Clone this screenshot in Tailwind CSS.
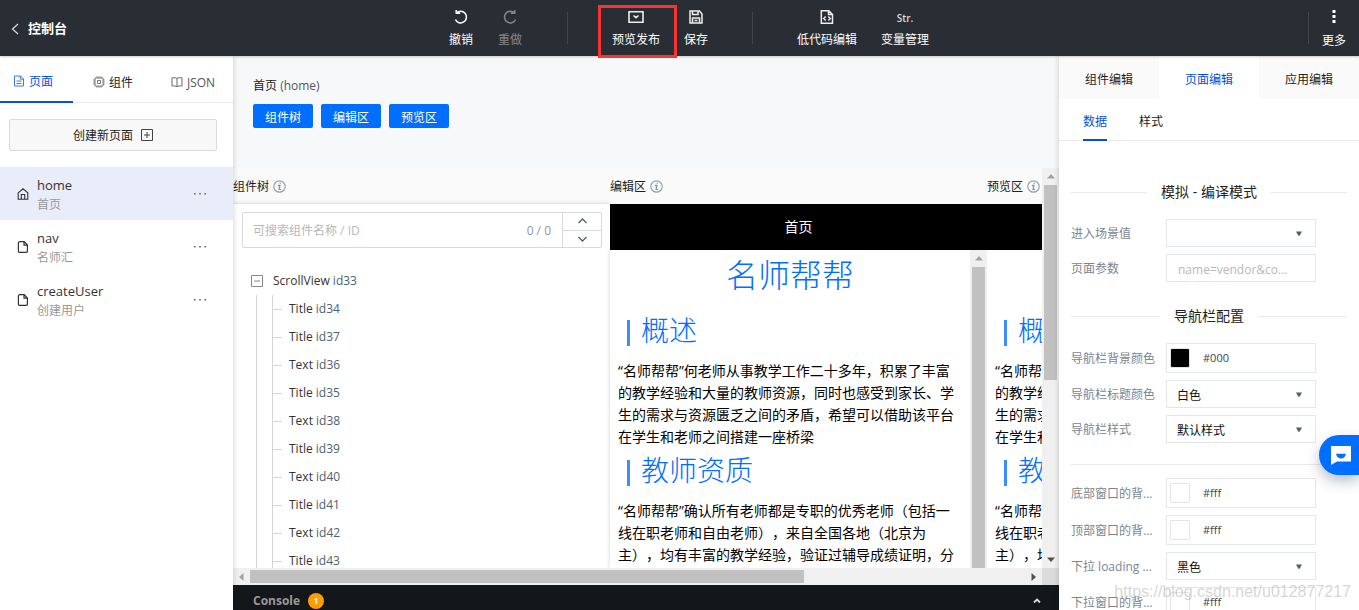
<!DOCTYPE html>
<html lang="zh-CN">
<head>
<meta charset="utf-8">
<title>控制台</title>
<script src="https://cdn.jsdelivr.net/npm/@tailwindcss/browser@4"></script>
</head>
<body class="font-['Open_Sans','Noto_Sans_CJK_SC',sans-serif] text-xs text-[#222] [text-spacing-trim:space-all]">
<svg class="hidden" aria-hidden="true">
  <symbol id="info" viewBox="0 0 13 13"><circle cx="6.500" cy="6.500" r="5.700" fill="none" stroke="#93a3b3" stroke-width="1.200"/><path d="M7.100 3.100h.3M5.300 5.500h1.600l-.8 3.800h1.500" fill="none" stroke="#8797a8" stroke-width="1.300" stroke-linecap="round"/></symbol>
  <symbol id="file" viewBox="0 0 12 12"><path d="M3 .7h4.200L10.400 4v6.300a1 1 0 0 1-1 1H2.400a1 1 0 0 1-1-1V2a1.300 1.300 0 0 1 1.300-1.300zM7 .7V4.200h3.400" fill="none" stroke="#333" stroke-width="1.200"/></symbol>
  <symbol id="caret" viewBox="0 0 6 5"><path d="M0 .5h6L3.600 4.800H2.400z" fill="#4b6270"/></symbol>
</svg>
<div class="relative flex h-screen flex-col overflow-hidden bg-white">

  <header class="relative z-20 flex h-14 shrink-0 bg-[#292d34] text-white shadow-[0_1px_2px_rgba(0,0,0,0.2)]">
    <a href="#" class="flex w-[449px] shrink-0 items-center gap-[9px] pt-0.5 pl-[11px] text-[13px] font-bold">
      <svg class="h-3 w-2" viewBox="0 0 8 12" fill="none" stroke="#ddd" stroke-width="1.200"><path d="M7 1 1.500 6 7 11"/></svg>控制台</a>
    <nav class="flex flex-1 items-start gap-6 pt-[9px]">
      <button class="flex flex-col items-center gap-[6px] leading-[18px]">
        <svg class="size-4" viewBox="0 0 16 16" fill="none" stroke="#fff" stroke-width="1.500"><path d="M3 4.200h4.200M3.200 1v3.700M3.300 4.300A5.800 5.800 0 1 1 2.400 10.500"/></svg>撤销</button>
      <button class="ml-px flex flex-col items-center gap-[6px] leading-[18px] text-[#85878b]">
        <svg class="size-4" viewBox="0 0 16 16" fill="none" stroke="#85878b" stroke-width="1.500"><path d="M13 4.200H8.800M12.800 1v3.700M12.700 4.300A5.800 5.800 0 1 0 13.600 10.500"/></svg>重做</button>
      <span class="mr-5 ml-[21px] mt-[3px] h-8 w-px bg-[#43464b]"></span>
      <button class="flex flex-col items-center gap-[6px] leading-[18px]">
        <svg class="size-4" viewBox="0 0 16 16" fill="none" stroke="#eee" stroke-width="1.600"><path d="M1 2.800h14v10.400H1zM5.500 6.500 8 8.700l2.500-2.200"/></svg>预览发布</button>
      <button class="flex flex-col items-center gap-[6px] leading-[18px]">
        <svg class="size-4" viewBox="0 0 16 16" fill="none" stroke="#eee" stroke-width="1.500"><path d="M2 2h9.500L14 5v9H2zM4.500 2v3.500H10V2M4.500 14V9h7v5M6.500 11.500h3"/></svg>保存</button>
      <span class="mx-5 mt-[3px] h-8 w-px bg-[#43464b]"></span>
      <button class="flex flex-col items-center gap-[6px] leading-[18px]">
        <svg class="size-4" viewBox="0 0 16 16" fill="none" stroke="#eee" stroke-width="1.500"><path d="M2.300 1.800h7.500l3.700 3.700v8.700H2.300zM9.500 2v3.500h4M6.700 7.500 4.700 9.500l2 2M9.300 7.500l2 2-2 2"/></svg>低代码编辑</button>
      <button class="flex flex-col items-center gap-[6px] leading-[18px]"><span class="h-4 text-[10px] leading-[18px] font-semibold text-[#ddd]">Str.</span>变量管理</button>
    </nav>
    <div class="flex w-[51px] shrink-0 items-start pt-3">
      <span class="h-8 w-px bg-[#43464b]"></span>
      <button class="mx-auto flex flex-col items-center gap-[7px] leading-[18px]">
        <svg class="-mt-[3px] size-4" viewBox="0 0 16 16" fill="#fff"><path d="M6.500 1h3v3h-3zM6.500 6h3v3h-3zM6.500 11h3v3h-3z"/></svg>更多</button>
    </div>
  </header>
  <div class="pointer-events-none absolute top-[5px] left-[598px] z-30 h-[53px] w-[79px] border-3 border-[#fb3232]"></div>

  <div class="flex min-h-0 flex-1">
    <aside class="z-10 w-[233px] shrink-0 bg-white shadow-[1px_0_5px_rgba(0,0,0,0.15)]">
      <div class="flex h-[47px] border-b border-[#eaeaea]">
        <button class="-mb-px flex w-[73px] items-center justify-center gap-1 border-b-2 border-[#0052d9] pr-[7px] pt-[7px] text-[#0052d9]">
          <svg class="-mt-0.5 size-3" viewBox="0 0 12 12" fill="none" stroke="#3c78df"><path d="M1.500 1h6L10.500 4v7h-9zM7.300 1v3.200h3M3.500 6h5M3.500 8.500h5"/></svg>页面</button>
        <button class="flex w-20 items-center justify-center gap-1 pt-[7px]">
          <svg class="-mt-0.5 size-3" viewBox="0 0 12 12" fill="none" stroke="#777"><path d="M2 2h8v8H2zM4.500 4.500h3v3h-3zM4 .3V2M6 .3V2M8 .3V2M4 10v1.700M6 10v1.700M8 10v1.700M.3 4H2M.3 6H2M.3 8H2M10 4h1.700M10 6h1.700M10 8h1.700"/></svg>组件</button>
        <button class="flex flex-1 items-center justify-center gap-1 pt-[7px] text-[#555]">
          <svg class="-mt-0.5 size-3" viewBox="0 0 12 12" fill="none" stroke="#666"><path d="M6 2.500C5 1.700 3 1.500 1 1.800v8.200c2-.2 4 0 5 .6 1-.6 3-.8 5-.6V1.800C9 1.500 7 1.700 6 2.500v8"/></svg>JSON</button>
      </div>
      <button class="mx-[9px] mt-4 flex h-8 w-[208px] items-center justify-center gap-2 rounded-xs border border-[#dcdcdc] bg-[#f8f8f8]"><span class="pt-0.5">创建新页面</span>
        <svg class="size-3" viewBox="0 0 12 12" fill="none" stroke="#444"><path d="M.5.500h11v11H.5zM6 3v6M3 6h6"/></svg></button>
      <ul class="mt-4">
        <li class="flex h-[53px] items-center bg-[#e9edfa] pr-[27px] pl-[17px]">
          <svg class="size-3" viewBox="0 0 12 12" fill="none" stroke="#333" stroke-width="1.100"><path d="M1.200 4.800 6 .8l4.800 4v6.400H1.200zM4.300 11V6.500h3.400V11"/></svg>
          <a href="#" class="ml-2 flex-1 pt-0.5 text-[13px] leading-5 font-medium text-[#333]">home<span class="block text-xs leading-5 font-normal text-[#999]">首页</span></a>
          <button aria-label="更多操作"><svg class="h-1 w-3" viewBox="0 0 12 4" fill="#666"><path d="M0 1h1.600v1.600H0zM5.200 1h1.600v1.600H5.200zM10.400 1H12v1.600h-1.600z"/></svg></button>
        </li>
        <li class="flex h-[53px] items-center pr-[27px] pl-[17px]">
          <svg class="size-3"><use href="#file"/></svg>
          <a href="#" class="ml-2 flex-1 pt-0.5 text-[13px] leading-5 font-medium text-[#333]">nav<span class="block text-xs leading-5 font-normal text-[#999]">名师汇</span></a>
          <button aria-label="更多操作"><svg class="h-1 w-3" viewBox="0 0 12 4" fill="#666"><path d="M0 1h1.600v1.600H0zM5.200 1h1.600v1.600H5.200zM10.400 1H12v1.600h-1.600z"/></svg></button>
        </li>
        <li class="flex h-[53px] items-center pr-[27px] pl-[17px]">
          <svg class="size-3"><use href="#file"/></svg>
          <a href="#" class="ml-2 flex-1 pt-0.5 text-[13px] leading-5 font-medium text-[#333]">createUser<span class="block text-xs leading-5 font-normal text-[#999]">创建用户</span></a>
          <button aria-label="更多操作"><svg class="h-1 w-3" viewBox="0 0 12 4" fill="#666"><path d="M0 1h1.600v1.600H0zM5.200 1h1.600v1.600H5.200zM10.400 1H12v1.600h-1.600z"/></svg></button>
        </li>
      </ul>
    </aside>

    <main class="flex min-w-0 flex-1 flex-col">
      <section class="h-28 shrink-0 bg-[#f7f8fa] px-5 pt-5">
        <h1 class="leading-5">首页 <span class="text-[#555]">(home)</span></h1>
        <div class="mt-2 flex gap-2 text-white">
          <button class="h-6 w-[60px] rounded-xs bg-[#006eff] pt-1">组件树</button>
          <button class="h-6 w-[60px] rounded-xs bg-[#006eff] pt-1">编辑区</button>
          <button class="h-6 w-[60px] rounded-xs bg-[#006eff] pt-1">预览区</button>
        </div>
      </section>

      <div class="flex min-h-0 flex-1">
        <div class="min-w-0 flex-1 overflow-hidden">
          <div class="grid h-full w-[1131px] grid-cols-3">
            <section class="flex min-h-0 flex-col">
              <h2 class="flex h-9 shrink-0 items-center gap-1 bg-[#fafafa] pt-px">组件树<svg class="size-[13px]"><use href="#info"/></svg></h2>
              <div class="min-h-0 flex-1 overflow-hidden pt-2 pr-2 pl-[9px] shadow-[0_0_4px_rgba(0,0,0,0.2)]">
                <div class="flex h-9 rounded-xs border border-[#d9d9d9]">
                  <input aria-label="搜索组件" placeholder="可搜索组件名称 / ID" class="min-w-0 flex-1 px-[10px] pt-0.5 outline-none placeholder:text-[#b8b8b8]">
                  <span class="self-center pt-0.5 pr-[11px] text-[#8999a8]">0 / 0</span>
                  <div class="flex w-[39px] flex-col divide-y divide-[#d9d9d9] border-l border-[#d9d9d9]">
                    <button aria-label="上一个" class="flex flex-1 items-center justify-center"><svg class="h-[6px] w-[9px]" viewBox="0 0 9 6" fill="none" stroke="#4b6270" stroke-width="1.300"><path d="m.5 5 4-4 4 4"/></svg></button>
                    <button aria-label="下一个" class="flex flex-1 items-center justify-center"><svg class="h-[6px] w-[9px]" viewBox="0 0 9 6" fill="none" stroke="#4b6270" stroke-width="1.300"><path d="m.5 1 4 4 4-4"/></svg></button>
                  </div>
                </div>
                <div class="mt-[19px] ml-[9px] text-[#333]">
                  <div class="flex h-7 items-center"><svg class="mr-[10px] size-3" viewBox="0 0 12 12" fill="none" stroke="#888"><path d="M.5.500h11v11H.5zM3 6h6"/></svg>ScrollView&nbsp;<span class="text-[#4b6270]">id33</span></div>
                  <div class="ml-[5px] border-l border-[#d5d5d5] pl-[15px]">
                    <ul class="border-l border-[#d5d5d5]">
                      <li class="flex h-7 items-center"><span class="mr-[7px] h-px w-[9px] bg-[#d5d5d5]"></span>Title&nbsp;<span class="text-[#4b6270]">id34</span></li>
                      <li class="flex h-7 items-center"><span class="mr-[7px] h-px w-[9px] bg-[#d5d5d5]"></span>Title&nbsp;<span class="text-[#4b6270]">id37</span></li>
                      <li class="flex h-7 items-center"><span class="mr-[7px] h-px w-[9px] bg-[#d5d5d5]"></span>Text&nbsp;<span class="text-[#4b6270]">id36</span></li>
                      <li class="flex h-7 items-center"><span class="mr-[7px] h-px w-[9px] bg-[#d5d5d5]"></span>Title&nbsp;<span class="text-[#4b6270]">id35</span></li>
                      <li class="flex h-7 items-center"><span class="mr-[7px] h-px w-[9px] bg-[#d5d5d5]"></span>Text&nbsp;<span class="text-[#4b6270]">id38</span></li>
                      <li class="flex h-7 items-center"><span class="mr-[7px] h-px w-[9px] bg-[#d5d5d5]"></span>Title&nbsp;<span class="text-[#4b6270]">id39</span></li>
                      <li class="flex h-7 items-center"><span class="mr-[7px] h-px w-[9px] bg-[#d5d5d5]"></span>Text&nbsp;<span class="text-[#4b6270]">id40</span></li>
                      <li class="flex h-7 items-center"><span class="mr-[7px] h-px w-[9px] bg-[#d5d5d5]"></span>Title&nbsp;<span class="text-[#4b6270]">id41</span></li>
                      <li class="flex h-7 items-center"><span class="mr-[7px] h-px w-[9px] bg-[#d5d5d5]"></span>Text&nbsp;<span class="text-[#4b6270]">id42</span></li>
                      <li class="flex h-7 items-center"><span class="mr-[7px] h-px w-[9px] bg-[#d5d5d5]"></span>Title&nbsp;<span class="text-[#4b6270]">id43</span></li>
                    </ul>
                  </div>
                </div>
              </div>
            </section>

            <section class="flex min-h-0 flex-col">
              <h2 class="flex h-9 shrink-0 items-center gap-1 bg-[#fafafa] pt-px">编辑区<svg class="size-[13px]"><use href="#info"/></svg></h2>
              <div class="flex h-[46px] shrink-0 items-center justify-center bg-black text-sm text-white">首页</div>
              <div class="flex min-h-0 flex-1 overflow-hidden bg-white shadow-[0_0_4px_rgba(0,0,0,0.2)]">
                <article class="flex-1 px-2 text-sm leading-[22px] whitespace-nowrap text-black">
                  <h3 class="text-center text-[32px] leading-[50px] font-light text-[#006eff]">名师帮帮</h3>
                  <h4 class="my-2 flex items-center gap-[11px] pl-[9px] text-[28px] leading-[44px] font-light text-[#006eff]"><span class="mt-[6px] h-[26px] w-[3px] bg-[#3a8fff]"></span>概述</h4>
                  <p>“名师帮帮”何老师从事教学工作二十多年，积累了丰富<br>的教学经验和大量的教师资源，同时也感受到家长、学<br>生的需求与资源匮乏之间的矛盾，希望可以借助该平台<br>在学生和老师之间搭建一座桥梁</p>
                  <h4 class="mb-2 flex items-center gap-[11px] pl-[9px] text-[28px] leading-[44px] font-light text-[#006eff]"><span class="mt-[6px] h-[26px] w-[3px] bg-[#3a8fff]"></span>教师资质</h4>
                  <p>“名师帮帮”确认所有老师都是专职的优秀老师（包括一<br>线在职老师和自由老师），来自全国各地（北京为<br>主），均有丰富的教学经验，验证过辅导成绩证明，分</p>
                </article>
                <div class="flex w-[17px] flex-col items-center bg-[#f0f0f0]" aria-hidden="true">
                  <svg class="my-[6px] h-[5px] w-2 shrink-0" viewBox="0 0 8 5" fill="#a3a3a3"><path d="M4 0l4 4.500H0z"/></svg>
                  <span class="w-[13px] flex-1 bg-[#c1c1c1]"></span>
                </div>
              </div>
            </section>

            <section class="flex min-h-0 flex-col">
              <h2 class="flex h-9 shrink-0 items-center gap-1 bg-[#fafafa] pt-px">预览区<svg class="size-[13px]"><use href="#info"/></svg></h2>
              <div class="h-[46px] shrink-0 bg-black"></div>
              <article class="w-[55px] min-h-0 flex-1 overflow-hidden bg-white pl-2 text-sm leading-[22px] whitespace-nowrap text-black">
                <h4 class="mt-[58px] mb-2 flex items-center gap-[11px] pl-[9px] text-[28px] leading-[44px] font-light text-[#006eff]"><span class="mt-[6px] h-[26px] w-[3px] shrink-0 bg-[#3a8fff]"></span>概述</h4>
                <p>“名师帮帮”何老师从事教学工作二十多年，积累了丰富<br>的教学经验和大量的教师资源，同时也感受到家长、学<br>生的需求与资源匮乏之间的矛盾，希望可以借助该平台<br>在学生和老师之间搭建一座桥梁</p>
                <h4 class="mb-2 flex items-center gap-[11px] pl-[9px] text-[28px] leading-[44px] font-light text-[#006eff]"><span class="mt-[6px] h-[26px] w-[3px] shrink-0 bg-[#3a8fff]"></span>教师资质</h4>
                <p>“名师帮帮”确认所有老师都是专职的优秀老师（包括一<br>线在职老师和自由老师），来自全国各地（北京为<br>主），均有丰富的教学经验，验证过辅导成绩证明，分</p>
              </article>
            </section>
          </div>
        </div>
        <div class="flex w-[17px] flex-col items-center bg-[#f0f0f0]" aria-hidden="true">
          <svg class="my-[6px] h-[5px] w-2 shrink-0" viewBox="0 0 8 5" fill="#a3a3a3"><path d="M4 0l4 4.500H0z"/></svg>
          <span class="h-[195px] w-[13px] bg-[#c1c1c1]"></span>
          <svg class="mt-auto mb-[6px] h-[5px] w-2 shrink-0" viewBox="0 0 8 5" fill="#505050"><path d="M4 5l4-4.500H0z"/></svg>
        </div>
      </div>
      <div class="flex h-[17px] shrink-0 bg-[#f0f0f0]" aria-hidden="true">
        <div class="flex flex-1 items-center">
          <svg class="mx-[6px] h-2 w-[5px]" viewBox="0 0 5 8" fill="#a3a3a3"><path d="M0 4l4.500-4v8z"/></svg>
          <span class="h-[13px] w-[554px] bg-[#c1c1c1]"></span>
          <svg class="mr-[6px] ml-auto h-2 w-[5px]" viewBox="0 0 5 8" fill="#505050"><path d="M5 4L.5 0v8z"/></svg>
        </div>
        <div class="w-[17px] bg-[#dcdcdc]"></div>
      </div>
      <footer class="flex h-[25px] shrink-0 items-center bg-[#14171a] px-5 pt-[6px] font-bold text-[#999]">Console
        <span class="ml-2 size-4 rounded-full bg-[#ff9d00] text-center text-[8px] leading-4 font-bold text-white">1</span>
        <button aria-label="展开控制台" class="mr-[-2px] ml-auto"><svg class="h-[5px] w-2" viewBox="0 0 8 5" fill="none" stroke="#ddd" stroke-width="1.800"><path d="m1 4.500 3-3 3 3"/></svg></button>
      </footer>
    </main>

    <aside class="z-10 w-[300px] shrink-0 overflow-hidden bg-white shadow-[-1px_0_5px_rgba(0,0,0,0.15)]">
      <div class="grid h-[43px] grid-cols-3 bg-[#fafafa]">
        <button class="pt-1">组件编辑</button>
        <button class="bg-white pt-1 text-[#0052d9]">页面编辑</button>
        <button class="pt-1">应用编辑</button>
      </div>
      <div class="flex h-[42px] gap-8 border-b border-[#eaeaea] px-6">
        <button class="-mb-px border-b-2 border-[#0052d9] pt-[6px] text-[#0052d9]">数据</button>
        <button class="-mb-px border-b-2 border-transparent pt-[6px]">样式</button>
      </div>
      <form class="flex flex-col gap-[7px] px-3 pt-10 text-[#7a8591]">
        <h3 class="mb-[9px] flex h-[22px] items-center gap-[14px] text-sm text-[#222]"><span class="h-px flex-1 bg-[#eaeaea]"></span>模拟 - 编译模式<span class="h-px flex-1 bg-[#eaeaea]"></span></h3>
        <div class="flex items-center"><label for="scene" class="w-[95px] truncate pt-0.5">进入场景值</label>
          <div class="relative w-[150px]"><select id="scene" class="block h-7 w-full appearance-none border border-[#e4e7ea] px-[10px] text-[#222]"><option></option></select><svg class="pointer-events-none absolute top-3 right-[14px] h-[5px] w-[6px]"><use href="#caret"/></svg></div></div>
        <div class="flex items-center"><label for="params" class="w-[95px] truncate pt-0.5">页面参数</label>
          <input id="params" placeholder="name=vendor&amp;co..." class="h-7 w-[150px] border border-[#e4e7ea] px-[11px] pt-0.5 placeholder:text-[#b8b8b8]"></div>
        <h3 class="mt-4 mb-[9px] flex h-[22px] items-center gap-[14px] text-sm text-[#222]"><span class="h-px flex-1 bg-[#eaeaea]"></span>导航栏配置<span class="h-px flex-1 bg-[#eaeaea]"></span></h3>
        <div class="flex items-center"><label for="navbg" class="w-[95px] truncate pt-0.5">导航栏背景颜色</label>
          <div class="flex h-[30px] w-[150px] items-center border border-[#e4e7ea] pl-[3px]"><span class="size-5 shrink-0 rounded-xs border border-[#e4e4e4] bg-black"></span><input id="navbg" value="#000" class="ml-[13px] w-20 pt-px text-[11px] text-[#444]"></div></div>
        <div class="flex items-center"><label for="navtitle" class="w-[95px] truncate pt-0.5">导航栏标题颜色</label>
          <div class="relative w-[150px]"><select id="navtitle" class="block h-7 w-full appearance-none border border-[#e4e7ea] px-[10px] pt-1 text-[#111]"><option>白色</option></select><svg class="pointer-events-none absolute top-3 right-[14px] h-[5px] w-[6px]"><use href="#caret"/></svg></div></div>
        <div class="flex items-center"><label for="navstyle" class="w-[95px] truncate pt-0.5">导航栏样式</label>
          <div class="relative w-[150px]"><select id="navstyle" class="block h-7 w-full appearance-none border border-[#e4e7ea] px-[10px] pt-1 text-[#111]"><option>默认样式</option></select><svg class="pointer-events-none absolute top-3 right-[14px] h-[5px] w-[6px]"><use href="#caret"/></svg></div></div>
        <hr class="mt-[14px] mb-[6px] border-[#eaeaea]">
        <div class="flex items-center"><label for="bottombg" class="w-[95px] truncate pt-0.5">底部窗口的背...</label>
          <div class="flex h-[30px] w-[150px] items-center border border-[#e4e7ea] pl-[3px]"><span class="size-5 shrink-0 rounded-xs border border-[#e4e4e4]"></span><input id="bottombg" value="#fff" class="ml-[13px] w-20 pt-px text-[11px] text-[#444]"></div></div>
        <div class="flex items-center"><label for="topbg" class="w-[95px] truncate pt-0.5">顶部窗口的背...</label>
          <div class="flex h-[30px] w-[150px] items-center border border-[#e4e7ea] pl-[3px]"><span class="size-5 shrink-0 rounded-xs border border-[#e4e4e4]"></span><input id="topbg" value="#fff" class="ml-[13px] w-20 pt-px text-[11px] text-[#444]"></div></div>
        <div class="flex items-center"><label for="loading" class="w-[95px] truncate pt-0.5">下拉 loading ...</label>
          <div class="relative w-[150px]"><select id="loading" class="block h-7 w-full appearance-none border border-[#e4e7ea] px-[10px] pt-1 text-[#111]"><option>黑色</option></select><svg class="pointer-events-none absolute top-3 right-[14px] h-[5px] w-[6px]"><use href="#caret"/></svg></div></div>
        <div class="flex items-center"><label for="pullbg" class="w-[95px] truncate pt-0.5">下拉窗口的背...</label>
          <div class="flex h-[30px] w-[150px] items-center border border-[#e4e7ea] pl-[3px]"><span class="size-5 shrink-0 rounded-xs border border-[#e4e4e4]"></span><input id="pullbg" value="#fff" class="ml-[13px] w-20 pt-px text-[11px] text-[#444]"></div></div>
      </form>
    </aside>
  </div>

  <button aria-label="在线客服" class="absolute top-[435px] right-0 z-30 flex h-10 w-10 items-center rounded-l-full bg-[#006eff] pl-3 shadow-[0_6px_14px_rgba(20,40,90,0.3)]">
    <svg class="h-[19px] w-5" viewBox="0 0 20 19"><path d="M0 0h20v15.500H6L0 19z" fill="#fff"/><path d="M5 7.800h10c-.6 3-2.500 4.700-5 4.700S5.600 10.800 5 7.800z" fill="#006eff"/></svg>
  </button>
  <div class="pointer-events-none absolute right-2 bottom-2 z-30 font-['Liberation_Sans',sans-serif] text-base leading-5 text-[#b9b9b9]/60">https://blog.csdn.net/u012877217</div>
</div>
</body>
</html>
